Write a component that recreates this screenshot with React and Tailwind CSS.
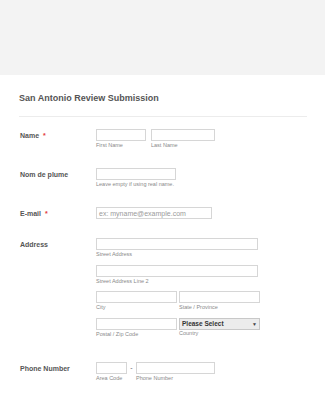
const font = { fontFamily: '"Liberation Sans", Arial, sans-serif' }

function Box({ w, children, className = '' }) {
  return (
    <div
      className={`h-[12px] border border-[#d6d6d6] bg-white ${w} ${className}`}
    >
      {children}
    </div>
  )
}

function Sub({ children, className = '' }) {
  return (
    <div className={`text-[5.5px] leading-[8px] text-[#8a8a8a] ${className}`}>
      {children}
    </div>
  )
}

function Label({ text, required }) {
  return (
    <div className="w-[76px] shrink-0 pt-[1px] text-[7px] font-bold leading-[12px] text-[#555]">
      {text}
      {required && <span className="ml-[4px] text-[#e23c3c]">*</span>}
    </div>
  )
}

export default function App() {
  return (
    <div className="h-[400px] w-[325px] overflow-hidden bg-white" style={font}>
      {/* top band */}
      <div className="h-[75px] bg-[#f3f3f3]" />

      <div className="pl-[19px] pr-[18px]">
        <h1 className="mt-[16px] text-[9px] font-bold leading-[14px] text-[#555]">
          San Antonio Review Submission
        </h1>
        <div className="mt-[11px] border-b border-[#ececec]" />

        <div className="pl-[1px]">
          {/* Name */}
          <div className="mt-[12px] flex">
            <Label text="Name" required />
            <div className="flex gap-[5px]">
              <div>
                <Box w="w-[50px]" />
                <Sub>First Name</Sub>
              </div>
              <div>
                <Box w="w-[64px]" />
                <Sub>Last Name</Sub>
              </div>
            </div>
          </div>

          {/* Nom de plume */}
          <div className="mt-[19px] flex">
            <Label text="Nom de plume" />
            <div>
              <Box w="w-[80px]" />
              <Sub>Leave empty if using real name.</Sub>
            </div>
          </div>

          {/* Email */}
          <div className="mt-[19px] flex">
            <Label text="E-mail" required />
            <Box w="w-[116px]" className="flex items-center pl-[2px]">
              <span className="text-[7px] leading-none text-[#9a9a9a]">
                ex: myname@example.com
              </span>
            </Box>
          </div>

          {/* Address */}
          <div className="mt-[18px] flex">
            <Label text="Address" />
            <div className="flex flex-col">
              <Box w="w-[162px]" />
              <Sub>Street Address</Sub>
              <Box w="w-[162px]" className="mt-[7px]" />
              <Sub>Street Address Line 2</Sub>
              <div className="mt-[6px] flex gap-[2px]">
                <div>
                  <Box w="w-[81px]" />
                  <Sub>City</Sub>
                </div>
                <div>
                  <Box w="w-[81px]" />
                  <Sub>State / Province</Sub>
                </div>
              </div>
              <div className="mt-[7px] flex gap-[2px]">
                <div>
                  <Box w="w-[81px]" />
                  <Sub>Postal / Zip Code</Sub>
                </div>
                <div>
                  <div className="flex h-[12px] w-[81px] items-center justify-between border border-[#c8c8c8] bg-[#ececec] px-[2px]">
                    <span className="text-[6.5px] font-bold leading-none text-[#333]">
                      Please Select
                    </span>
                    <span className="text-[5px] leading-none text-[#444]">▼</span>
                  </div>
                  <Sub className="-mt-[1px]">Country</Sub>
                </div>
              </div>
            </div>
          </div>

          {/* Phone */}
          <div className="mt-[24px] flex">
            <Label text="Phone Number" />
            <div className="flex">
              <div>
                <Box w="w-[31px]" />
                <Sub>Area Code</Sub>
              </div>
              <div className="w-[9px] text-center text-[7px] leading-[12px] text-[#666]">
                -
              </div>
              <div>
                <Box w="w-[79px]" />
                <Sub>Phone Number</Sub>
              </div>
            </div>
          </div>
        </div>
      </div>
    </div>
  )
}
